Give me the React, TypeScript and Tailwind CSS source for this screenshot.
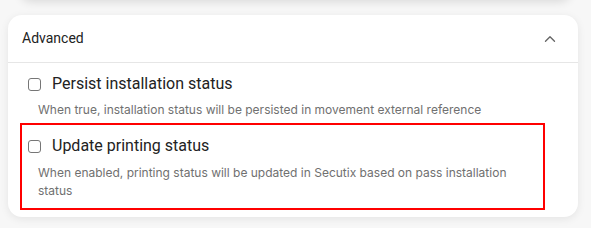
import { ChevronUp } from "lucide-react";

const options = [
  {
    title: "Persist installation status",
    description:
      "When true, installation status will be persisted in movement external reference",
    highlighted: false,
  },
  {
    title: "Update printing status",
    description:
      "When enabled, printing status will be updated in Secutix based on pass installation status",
    highlighted: true,
  },
];

function Option({
  title,
  description,
  highlighted,
}: {
  title: string;
  description: string;
  highlighted: boolean;
}) {
  return (
    <div
      className={`w-[525px] pl-[6px] pr-4 border-2 ${
        highlighted ? "border-[#ff0000] pt-[8px] pb-[8px]" : "border-transparent pt-[6px] pb-[2px]"
      }`}
    >
      <label className="flex items-center h-[26px]">
        <span className="w-[13px] h-[13px] rounded-[3px] border border-[#767676] bg-white" />
        <span className="ml-[11px] text-[16px] font-normal text-[#222] font-['Roboto',sans-serif]">
          {title}
        </span>
      </label>
      <p
        className={`${highlighted ? "mt-[5px]" : "mt-[4px]"} pl-[10px] text-[12px] leading-[18px] text-[#707070] font-['Inter',sans-serif]`}
      >
        {description}
      </p>
    </div>
  );
}

export default function App() {
  return (
    <div className="w-[591px] h-[228px] bg-[#f7f7f7] overflow-hidden relative">
      {/* previous card's shadow */}
      <div className="absolute left-[20px] right-[20px] -top-[30px] h-[30px] bg-white shadow-[0_2px_10px_rgba(0,0,0,0.12)] rounded-b-xl" />

      <div className="pt-[15px] pl-[8px]">
        <div className="w-[570px] bg-white rounded-[14px] shadow-[0_2px_8px_rgba(0,0,0,0.08)]">
          <div className="h-[48px] flex items-center justify-between pl-[14px] pr-[19px] border-b border-[#e6e6e6]">
            <span className="text-[14px] text-[#222] font-['Roboto',sans-serif]">
              Advanced
            </span>
            <ChevronUp className="w-[18px] h-[18px] text-[#666]" strokeWidth={1.8} />
          </div>
          <div className="pl-[12px] pb-[7px] flex flex-col">
            {options.map((o) => (
              <Option key={o.title} {...o} />
            ))}
          </div>
        </div>
      </div>
    </div>
  );
}
